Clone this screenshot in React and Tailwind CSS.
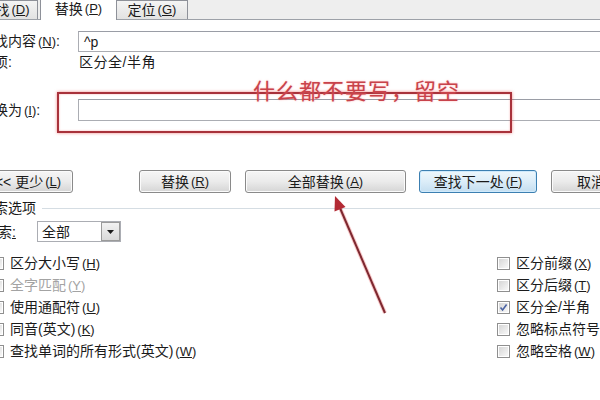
import React from 'react';

// --- Shared bits ---
const FONT = "font-[family-name:'Liberation_Sans','Noto_Sans_CJK_SC',sans-serif]";

// Mnemonic letter, e.g. (N) with underlined N
const Key = ({ k }) => (
  <span className="ml-[2px] text-[13px]">
    (<span className="underline underline-offset-1">{k}</span>)
  </span>
);

function TextBox({ children, className = '' }) {
  return (
    <div
      className={`flex flex-1 items-center border border-[#abadb3] border-t-[#9a9da6] bg-white pl-[5px] ${className}`}
    >
      {children}
    </div>
  );
}

function Btn({ children, className = '', primary = false }) {
  const skin = primary
    ? 'border-[#3c7fb1] from-[#eef7fc] via-[#dcedf8] to-[#c4def0] shadow-[inset_0_0_0_1px_#cfeafc]'
    : 'border-[#8a8a8a] from-[#f6f6f6] via-[#ebebeb] to-[#d5d5d5] shadow-[inset_0_0_0_1px_#fbfbfb]';
  return (
    <div
      className={`flex h-[23px] shrink-0 items-center justify-center rounded-[3px] border bg-linear-to-b ${skin} ${className}`}
    >
      {children}
    </div>
  );
}

function Check({ checked = false }) {
  return (
    <div className="flex h-[13px] w-[13px] shrink-0 items-center justify-center border border-[#8f8f8f] bg-white p-[1px]">
      <div className="relative h-full w-full bg-linear-to-br from-[#d6d6d6] to-[#f8f8f8]">
        {checked && (
          <svg viewBox="0 0 9 9" className="absolute inset-0 h-full w-full">
            <path d="M1.5 4.5 L3.6 7 L7.6 1.5" fill="none" stroke="#4b63a3" strokeWidth="1.6" />
          </svg>
        )}
      </div>
    </div>
  );
}

function Opt({ checked, disabled, children }) {
  return (
    <div className="flex h-[22px] items-center gap-[6px]">
      <Check checked={checked} />
      <span className={disabled ? 'text-[#a3a3a3]' : ''}>{children}</span>
    </div>
  );
}

// --- Tab strip ---
function Tabs() {
  const inactive =
    'flex h-[19px] items-center justify-center border border-b-0 border-[#8e9199] bg-linear-to-b from-[#f4f4f4] to-[#e2e2e2]';
  return (
    <div className="flex h-[20px] items-end border-b border-[#9da1a8] bg-[#eeeeee]">
      <div className={`${inactive} -ml-[27px] w-[65px]`}>
        查找<Key k="D" />
      </div>
      <div className="-mb-px ml-[2px] flex h-[21px] w-[77px] items-center justify-center border border-b-0 border-[#8e9199] bg-white pb-[2px]">
        替换<Key k="P" />
      </div>
      <div className={`${inactive} -ml-px w-[72px]`}>
        定位<Key k="G" />
      </div>
    </div>
  );
}

// --- Red annotations drawn over the dialog ---
function Annotations() {
  return (
    <>
      <div className="absolute left-[57px] top-[92px] h-[41px] w-[455px] border-2 border-[#a8323b] shadow-[0_0_3px_rgba(230,40,40,0.55),inset_0_0_2px_rgba(230,40,40,0.4)]" />
      <div className="absolute left-[253px] top-[78px] text-[22px] leading-[28px] tracking-[1px] text-[#c8434b] [text-shadow:0_0_2px_rgba(255,120,120,0.6)]">
        什么都不要写，留空
      </div>
      <svg className="absolute left-0 top-0" width="600" height="400" viewBox="0 0 600 400">
        <line x1="385" y1="313" x2="340" y2="208" stroke="#f08a8a" strokeWidth="4" opacity="0.45" />
        <line x1="385" y1="313" x2="340" y2="208" stroke="#7e2830" strokeWidth="2" />
        <polygon points="335,196 345.5,207 334.5,211.5" fill="#b32a34" />
      </svg>
    </>
  );
}

// --- Main ---
export default function App() {
  return (
    <div className={`relative h-[400px] w-[600px] overflow-hidden bg-white text-[14px] leading-[20px] text-[#1b1b1b] ${FONT}`}>
      <Tabs />

      <div className="-ml-[20px] w-[640px]">
        {/* Find what */}
        <div className="mt-[11px] flex h-[21px] items-center">
          <div className="w-[98px]">
            查找内容<Key k="N" />:
          </div>
          <TextBox className="h-[21px]">^p</TextBox>
        </div>

        {/* Options line */}
        <div className="flex h-[20px] items-center">
          <div className="w-[99px]">选项:</div>
          <div className="tracking-[0.5px]">区分全/半角</div>
        </div>

        {/* Replace with */}
        <div className="mt-[27px] flex h-[22px] items-center">
          <div className="w-[98px]">
            替换为<Key k="I" />:
          </div>
          <TextBox className="h-[22px]" />
        </div>

        {/* Buttons */}
        <div className="mt-[49px] flex h-[23px] items-center">
          <Btn className="ml-[3px] w-[90px]">
            &lt;&lt; 更少<Key k="L" />
          </Btn>
          <Btn className="ml-[66px] w-[92px]">
            替换<Key k="R" />
          </Btn>
          <Btn className="ml-[14px] w-[161px]">
            全部替换<Key k="A" />
          </Btn>
          <Btn primary className="ml-[13px] w-[118px]">
            查找下一处<Key k="F" />
          </Btn>
          <Btn className="ml-[14px] w-[80px]">取消</Btn>
        </div>

        {/* Search options group */}
        <div className="mt-[5px] flex h-[20px] items-center">
          <span>搜索选项</span>
          <div className="ml-[6px] flex-1 border-t border-[#d5dde3]" />
        </div>

        <div className="mt-[3px] flex h-[21px] items-center">
          <div className="w-[57px] pl-[4px]">
            搜索<span className="underline">:</span>
          </div>
          <div className="flex h-[21px] w-[84px] items-stretch border border-[#abadb3] bg-white">
            <div className="flex flex-1 items-center pl-[4px]">全部</div>
            <div className="flex w-[19px] items-center justify-center border border-[#9a9a9a] bg-linear-to-b from-[#f2f2f2] to-[#d9d9d9]">
              <svg width="7" height="4" viewBox="0 0 7 4">
                <polygon points="0,0 7,0 3.5,4" fill="#1b1b1b" />
              </svg>
            </div>
          </div>
        </div>

        {/* Checkboxes */}
        <div className="mt-[10px] grid grid-cols-[517px_1fr]">
          <div className="pl-[11px]">
            <Opt>
              区分大小写<Key k="H" />
            </Opt>
            <Opt disabled>
              全字匹配<Key k="Y" />
            </Opt>
            <Opt>
              使用通配符<Key k="U" />
            </Opt>
            <Opt>
              同音(英文)<Key k="K" />
            </Opt>
            <Opt>
              查找单词的所有形式(英文)<Key k="W" />
            </Opt>
          </div>
          <div>
            <Opt>
              区分前缀<Key k="X" />
            </Opt>
            <Opt>
              区分后缀<Key k="T" />
            </Opt>
            <Opt checked>区分全/半角</Opt>
            <Opt>
              忽略标点符号<Key k="S" />
            </Opt>
            <Opt>
              忽略空格<Key k="W" />
            </Opt>
          </div>
        </div>
      </div>

      <Annotations />
    </div>
  );
}
